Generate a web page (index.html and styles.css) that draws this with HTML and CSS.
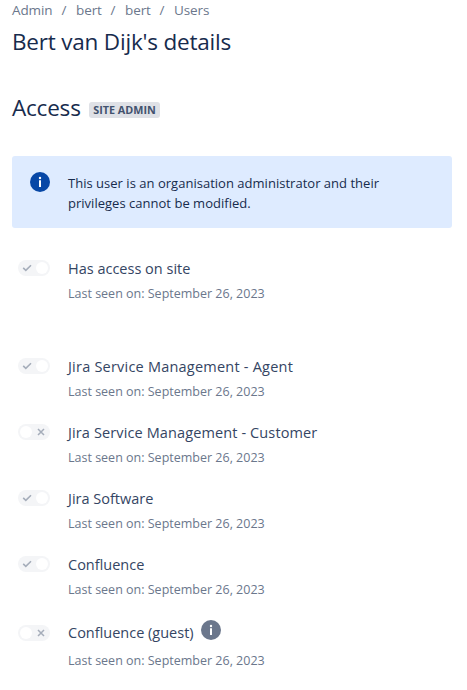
FILE: index.html
```html
<!DOCTYPE html>
<html lang="en">
<head>
<meta charset="utf-8">
<title>Bert van Dijk's details</title>
<link rel="stylesheet" href="styles.css">
</head>
<body>
<svg class="symbols" aria-hidden="true">
  <symbol id="check" viewBox="0 0 10 10"><path d="M1.2 4.9 3.8 7.3 9 2.2" fill="none" stroke="#a5adba" stroke-width="1.6"/></symbol>
  <symbol id="cross" viewBox="0 0 10 10"><path d="M2 2 8 8M8 2 2 8" fill="none" stroke="#a5adba" stroke-width="1.5"/></symbol>
  <symbol id="info" viewBox="0 0 20 20"><circle cx="10" cy="10" r="10" fill="currentColor"/><circle cx="10" cy="6" r="1.2" fill="#fff"/><path d="M9 8.2h2v6.8H9z" fill="#fff"/></symbol>
</svg>
<main class="page">
  <nav class="breadcrumbs">
    <a class="crumb crumb-admin">Admin</a><span class="slash">/</span>
    <a class="crumb crumb-short">bert</a><span class="slash">/</span>
    <a class="crumb crumb-short">bert</a><span class="slash">/</span>
    <a class="crumb">Users</a>
  </nav>
  <h1 class="title"><span>Bert van Dijk's details</span></h1>
  <div class="section-head">
    <h2 class="section-title">Access</h2>
    <span class="lozenge">SITE ADMIN</span>
  </div>
  <section class="message">
    <svg class="info message-icon"><use href="#info"/></svg>
    <p class="message-text">This user is an organisation administrator and their<br>privileges cannot be modified.</p>
  </section>
  <div class="row row-site">
    <span class="toggle on"><svg class="mark"><use href="#check"/></svg><i class="knob"></i></span>
    <div class="info-col"><div class="name">Has access on site</div><div class="seen">Last seen on: September 26, 2023</div></div>
  </div>
  <div class="row">
    <span class="toggle on"><svg class="mark"><use href="#check"/></svg><i class="knob"></i></span>
    <div class="info-col"><div class="name name-agent">Jira Service Management - Agent</div><div class="seen">Last seen on: September 26, 2023</div></div>
  </div>
  <div class="row">
    <span class="toggle off"><i class="knob"></i><svg class="mark"><use href="#cross"/></svg></span>
    <div class="info-col"><div class="name name-customer">Jira Service Management - Customer</div><div class="seen">Last seen on: September 26, 2023</div></div>
  </div>
  <div class="row">
    <span class="toggle on"><svg class="mark"><use href="#check"/></svg><i class="knob"></i></span>
    <div class="info-col"><div class="name">Jira Software</div><div class="seen">Last seen on: September 26, 2023</div></div>
  </div>
  <div class="row">
    <span class="toggle on"><svg class="mark"><use href="#check"/></svg><i class="knob"></i></span>
    <div class="info-col"><div class="name">Confluence</div><div class="seen">Last seen on: September 26, 2023</div></div>
  </div>
  <div class="row row-guest">
    <span class="toggle off"><i class="knob"></i><svg class="mark"><use href="#cross"/></svg></span>
    <div class="info-col"><div class="name">Confluence (guest)<svg class="info guest-icon"><use href="#info"/></svg></div><div class="seen">Last seen on: September 26, 2023</div></div>
  </div>
</main>
</body>
</html>
```
FILE: styles.css
```css
* { box-sizing: border-box; }
body {
  margin: 0;
  background: #fff;
  color: #172b4d;
  font-family: "Open Sans", "Noto Sans", sans-serif;
  white-space: nowrap;
  overflow: hidden;
}
h1, h2, p { margin: 0; font-weight: 400; }
.symbols { display: none; }
.page { padding: 0 15px 0 12px; }
.breadcrumbs {
  display: flex;
  height: 20px;
  font-size: 13.5px;
  line-height: 20px;
  color: #6b778c;
}
.crumb { letter-spacing: -0.1px; }
.crumb-admin { width: 40px; }
.crumb-short { width: 25px; }
.slash { width: 24px; text-align: center; }
.title {
  height: 28px;
  margin-top: 8px;
  font-size: 22.5px;
  line-height: 28px;
  letter-spacing: -0.2px;
}
.section-head { display: flex; align-items: center; height: 28px; margin-top: 38px; }
.section-title { width: 77px; font-size: 22.5px; line-height: 28px; letter-spacing: -0.2px; }
.lozenge {
  width: 71px;
  height: 16px;
  margin-top: 3px;
  border-radius: 3px;
  background: #dfe1e6;
  color: #42526e;
  font-size: 10.8px;
  font-weight: 700;
  line-height: 16px;
  text-align: center;
}
.info { display: block; flex: none; width: 20px; height: 20px; }
.message {
  display: flex;
  height: 72px;
  margin-top: 34px;
  margin-bottom: 30px;
  padding: 16px 18px;
  border-radius: 3px;
  background: #deebff;
}
.message-icon { color: #0747a6; margin-right: 18px; }
.message-text { margin-top: 1px; font-size: 13px; line-height: 20px; letter-spacing: 0.02px; }
.row { display: flex; height: 66px; padding-left: 6px; }
.row-site { height: 98px; }
.row-guest { padding-top: 2px; }
.info-col { padding-top: 1px; }
.toggle {
  display: flex;
  flex: none;
  align-items: center;
  justify-content: space-between;
  width: 32px;
  height: 16px;
  margin: 2px 18px 0 0;
  border-radius: 8px;
  background: #f4f5f7;
}
.on { padding: 0 2px 0 4px; }
.off { padding: 0 4px 0 2px; }
.row-guest .toggle { margin-top: 3px; }
.knob { width: 12px; height: 12px; border-radius: 50%; background: #fff; }
.mark { width: 10px; height: 10px; }
.name {
  display: flex;
  height: 20px;
  font-size: 14.5px;
  line-height: 20px;
  color: #344563;
}
.name-agent { letter-spacing: 0.22px; }
.name-customer { letter-spacing: 0.12px; }
.seen {
  margin-top: 5px;
  font-size: 12.5px;
  line-height: 20px;
  color: #6b778c;
}
.row-guest .seen { margin-top: 8px; }
.guest-icon { margin: -3px 0 0 7px; color: #6b778c; }
```
